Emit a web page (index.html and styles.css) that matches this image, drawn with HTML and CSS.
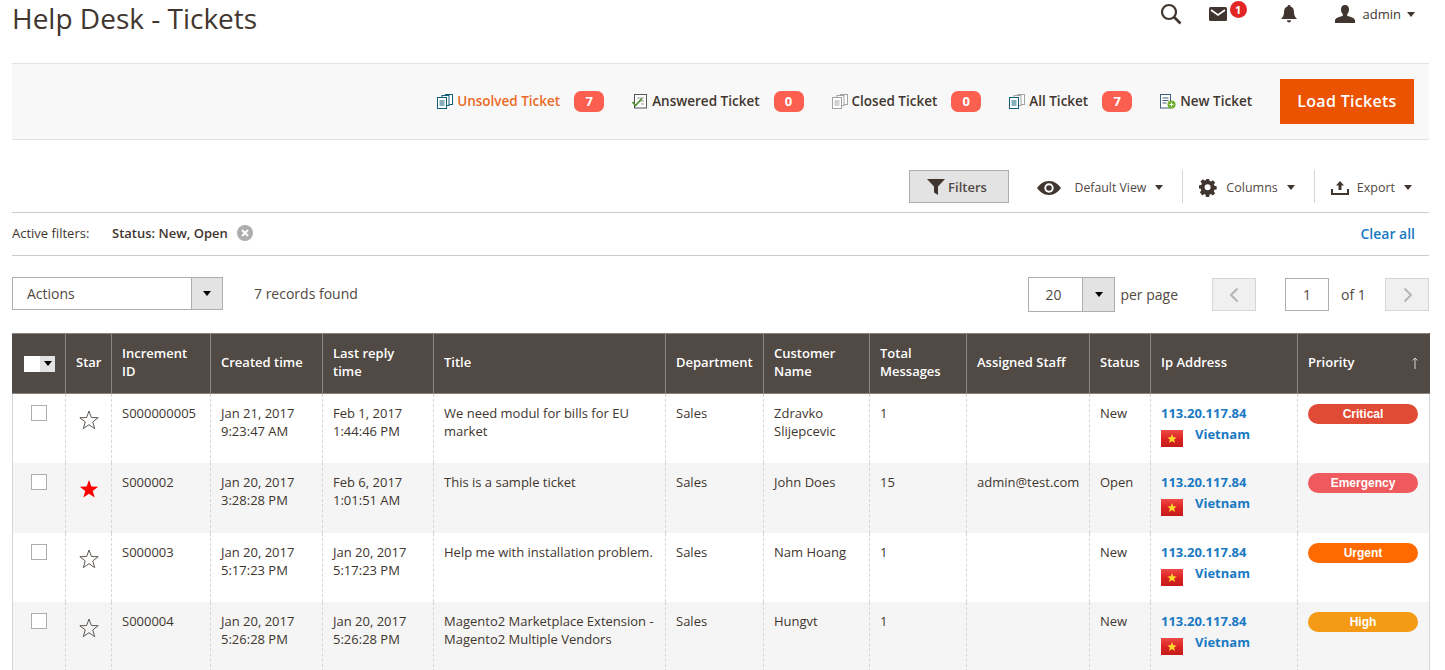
FILE: index.html
```html
<!DOCTYPE html>
<html>
<head>
  <link rel="stylesheet" href="styles.css">
</head>
<body>
  <svg class="defs" width="0" height="0">
    <linearGradient id="flag-red" x1="0" y1="0" x2="0" y2="1">
      <stop offset="0" stop-color="#ee4a48"/>
      <stop offset=".5" stop-color="#dc2322"/>
      <stop offset="1" stop-color="#c51c1c"/>
    </linearGradient>
    <symbol id="flag" viewBox="0 0 22 17">
      <rect width="22" height="17" fill="url(#flag-red)"/>
      <path d="M11 4l1.300 3.200 3.400.2-2.600 2.200.9 3.300-3-1.900-3 1.900.9-3.300-2.600-2.200 3.400-.2z" fill="#ffd92e"/>
    </symbol>
    <symbol id="star-line" viewBox="0 0 24 24">
      <path d="M12 2.200l2.600 7.100 7.400.2-5.900 4.600 2.100 7.300-6.200-4.300-6.200 4.300 2.100-7.300L2 9.500l7.400-.2z" fill="none" stroke="#514943" stroke-width="1"/>
    </symbol>
    <symbol id="star-full" viewBox="0 0 24 24">
      <path d="M12 2.200l2.600 7.100 7.400.2-5.900 4.600 2.100 7.300-6.200-4.300-6.200 4.300 2.100-7.300L2 9.500l7.400-.2z" fill="#f00"/>
    </symbol>
  </svg>

  <header class="page-head">
    <h1 class="page-title">Help Desk - Tickets</h1>
    <div class="head-actions">
      <svg class="head-search" viewBox="0 0 22 22"><circle cx="9" cy="9" r="7" fill="none" stroke="#41362f" stroke-width="2.200"/><path d="M14 14l6.500 6.500" stroke="#41362f" stroke-width="2.600"/></svg>
      <span class="head-mail">
        <svg viewBox="0 0 18 14"><rect width="18" height="14" rx="1.500" fill="#41362f"/><path d="M2 3l7 5 7-5" fill="none" stroke="#fff" stroke-width="1.600"/></svg>
        <span class="mail-count">1</span>
      </span>
      <svg class="head-bell" viewBox="0 0 16 18"><path d="M8 0c1 0 1.500.7 1.500 1.500C12 2.300 13 4.500 13 7c0 3.500 1 5 3 7H0c2-2 3-3.500 3-7 0-2.500 1-4.700 3.500-5.500C6.500.7 7 0 8 0z" fill="#41362f"/><path d="M6 15.200h4C10 16.500 9 17.500 8 17.500s-2-1-2-2.300z" fill="#41362f"/></svg>
      <span class="head-user">
        <svg viewBox="0 0 20 18"><path d="M10 0c2.800 0 4 2 4 4.500 0 2-.8 3.700-1.800 4.700v1.600c2.500 1 7.800 2 7.800 4.700V18H0v-2.500c0-2.700 5.300-3.700 7.800-4.700V9.200C6.800 8.200 6 6.500 6 4.500 6 2 7.200 0 10 0z" fill="#41362f"/></svg>
        admin <i class="caret"></i>
      </span>
    </div>
  </header>

  <section class="ticket-bar">
    <a class="ticket-link is-current">
      <svg viewBox="0 0 16 15"><g fill="#fff" stroke="#0f5f78" stroke-width="1"><rect x="8.500" y=".5" width="7" height="10"/><rect x="5" y="1.500" width="7" height="10"/><rect x=".5" y="3.500" width="9" height="11"/></g><path d="M2.500 7h5M2.500 9h5M2.500 11h5" stroke="#0f5f78"/></svg>
      Unsolved Ticket <span class="count">7</span>
    </a>
    <a class="ticket-link">
      <svg viewBox="0 0 16 15"><rect x="2.500" y=".5" width="12" height="13.500" fill="#fff" stroke="#555"/><path d="M5 4h7M7 7h5M9 10h3" stroke="#999"/><path d="M.5 8l3 3.500L10 4.500" fill="none" stroke="#4d8f2f" stroke-width="1.800"/></svg>
      Answered Ticket <span class="count">0</span>
    </a>
    <a class="ticket-link">
      <svg viewBox="0 0 16 15"><g fill="#fff" stroke="#a3a3a3" stroke-width="1"><rect x="8.500" y=".5" width="7" height="10"/><rect x="5" y="1.500" width="7" height="10"/><rect x=".5" y="3.500" width="9" height="11"/></g><path d="M2.500 7h5M2.500 9h5M2.500 11h5" stroke="#a3a3a3"/></svg>
      Closed Ticket <span class="count">0</span>
    </a>
    <a class="ticket-link">
      <svg viewBox="0 0 16 15"><g fill="#fff" stroke="#a3a3a3" stroke-width="1"><rect x="8.500" y=".5" width="7" height="10"/><rect x="5" y="1.500" width="7" height="10"/></g><rect x=".5" y="3.500" width="9" height="11" fill="#fff" stroke="#0f5f78"/><path d="M2.500 7h5M2.500 9h5M2.500 11h5" stroke="#0f5f78"/></svg>
      All Ticket <span class="count">7</span>
    </a>
    <a class="ticket-link">
      <svg viewBox="0 0 16 15"><rect x=".5" y=".5" width="10" height="13.500" fill="#fff" stroke="#44607a"/><path d="M2.500 4h6M2.500 6.500h6M2.500 9h4" stroke="#44607a"/><circle cx="11.500" cy="10.500" r="4" fill="#6fae2e"/><path d="M9.500 10.500h4M11.500 8.500v4" stroke="#fff"/></svg>
      New Ticket
    </a>
    <button class="load-btn">Load Tickets</button>
  </section>

  <section class="grid-tools">
    <button class="filters-btn">
      <svg viewBox="0 0 18 16"><path d="M0 0h18l-7 7.500V16l-4-2.500V7.500z" fill="#41362f"/></svg>
      Filters
    </button>
    <div class="tool view-tool">
      <svg class="eye" viewBox="0 0 24 14"><path d="M12 0c5.500 0 9.500 3.500 12 7-2.500 3.500-6.500 7-12 7S2.500 10.500 0 7c2.500-3.500 6.500-7 12-7z" fill="#41362f"/><circle cx="12" cy="7" r="4.700" fill="#fff"/><circle cx="12" cy="7" r="2.800" fill="#41362f"/></svg>
      <span class="view-name">Default View</span> <i class="caret"></i>
    </div>
    <div class="tool">
      <svg class="gear" viewBox="0 0 18 18"><path d="M7.300 0h3.400l.4 2.400 1.500.6 2-1.400 2.400 2.400-1.400 2 .6 1.500 2.400.4v3.400l-2.400.4-.6 1.500 1.400 2-2.400 2.400-2-1.400-1.500.6-.4 2.400H7.300l-.4-2.400-1.500-.6-2 1.400L1 14.200l1.400-2-.6-1.500L0 10.300V6.900l2.400-.4.6-1.500-1.400-2L4 .6l2 1.400 1.500-.6z" fill="#41362f" transform="translate(0 -.3) scale(.95)"/><circle cx="8.600" cy="8.200" r="3" fill="#fff"/></svg>
      Columns <i class="caret"></i>
    </div>
    <div class="tool">
      <svg class="upload" viewBox="0 0 18 14"><path d="M9 0l4 4.500h-2.500V9h-3V4.500H5z" fill="#41362f"/><path d="M1 8v5h16V8" fill="none" stroke="#41362f" stroke-width="2"/></svg>
      Export <i class="caret"></i>
    </div>
  </section>

  <section class="active-filters">
    <span class="af-label">Active filters:</span>
    <strong class="af-value">Status: New, Open</strong>
    <svg class="af-remove" viewBox="0 0 16 16"><circle cx="8" cy="8" r="8" fill="#adadad"/><path d="M5 5l6 6M11 5l-6 6" stroke="#fff" stroke-width="2"/></svg>
    <a class="clear-all">Clear all</a>
  </section>

  <section class="pager-row">
    <div class="select actions-select"><span>Actions</span><b><i class="caret dark"></i></b></div>
    <span class="records">7 records found</span>
    <div class="pager">
      <div class="select size-select"><span>20</span><b><i class="caret dark"></i></b></div>
      <span class="per-page">per page</span>
      <button class="page-btn"><svg viewBox="0 0 10 16"><path d="M8.500 1.500L2 8l6.500 6.500" fill="none" stroke="#b5b5b5" stroke-width="2"/></svg></button>
      <span class="page-input">1</span>
      <span class="page-of">of 1</span>
      <button class="page-btn next"><svg viewBox="0 0 10 16"><path d="M1.500 1.500L8 8l-6.500 6.500" fill="none" stroke="#b5b5b5" stroke-width="2"/></svg></button>
    </div>
  </section>

  <table class="tickets">
    <colgroup>
      <col class="c-check"><col class="c-star"><col class="c-id"><col class="c-created"><col class="c-reply"><col class="c-title">
      <col class="c-dept"><col class="c-cust"><col class="c-total"><col class="c-staff"><col class="c-status"><col class="c-ip"><col class="c-prio">
    </colgroup>
    <thead>
      <tr>
        <th class="mass"><span class="mass-box"><i></i><b><i class="caret dark small"></i></b></span></th>
        <th>Star</th>
        <th>Increment ID</th>
        <th>Created time</th>
        <th>Last reply time</th>
        <th>Title</th>
        <th>Department</th>
        <th>Customer Name</th>
        <th>Total Messages</th>
        <th>Assigned Staff</th>
        <th>Status</th>
        <th>Ip Address</th>
        <th class="sorted">Priority
          <svg class="sort-arrow" viewBox="0 0 8 12"><path d="M4 12V1M1.500 3.500L4 1l2.500 2.500" fill="none" stroke="#d6d6d6"/></svg>
        </th>
      </tr>
    </thead>
    <tbody>
      <tr>
        <td class="check"><span class="checkbox"></span></td>
        <td class="star"><svg><use href="#star-line"/></svg></td>
        <td>S000000005</td>
        <td>Jan 21, 2017<br>9:23:47 AM</td>
        <td>Feb 1, 2017<br>1:44:46 PM</td>
        <td>We need modul for bills for EU market</td>
        <td>Sales</td>
        <td>Zdravko Slijepcevic</td>
        <td>1</td>
        <td></td>
        <td>New</td>
        <td class="ip"><a>113.20.117.84</a><div class="country"><svg><use href="#flag"/></svg><a>Vietnam</a></div></td>
        <td class="prio-cell"><span class="prio critical">Critical</span></td>
      </tr>
      <tr>
        <td class="check"><span class="checkbox"></span></td>
        <td class="star"><svg><use href="#star-full"/></svg></td>
        <td>S000002</td>
        <td>Jan 20, 2017<br>3:28:28 PM</td>
        <td>Feb 6, 2017<br>1:01:51 AM</td>
        <td>This is a sample ticket</td>
        <td>Sales</td>
        <td>John Does</td>
        <td>15</td>
        <td>admin@test.com</td>
        <td>Open</td>
        <td class="ip"><a>113.20.117.84</a><div class="country"><svg><use href="#flag"/></svg><a>Vietnam</a></div></td>
        <td class="prio-cell"><span class="prio emergency">Emergency</span></td>
      </tr>
      <tr>
        <td class="check"><span class="checkbox"></span></td>
        <td class="star"><svg><use href="#star-line"/></svg></td>
        <td>S000003</td>
        <td>Jan 20, 2017<br>5:17:23 PM</td>
        <td>Jan 20, 2017<br>5:17:23 PM</td>
        <td>Help me with installation problem.</td>
        <td>Sales</td>
        <td>Nam Hoang</td>
        <td>1</td>
        <td></td>
        <td>New</td>
        <td class="ip"><a>113.20.117.84</a><div class="country"><svg><use href="#flag"/></svg><a>Vietnam</a></div></td>
        <td class="prio-cell"><span class="prio urgent">Urgent</span></td>
      </tr>
      <tr>
        <td class="check"><span class="checkbox"></span></td>
        <td class="star"><svg><use href="#star-line"/></svg></td>
        <td>S000004</td>
        <td>Jan 20, 2017<br>5:26:28 PM</td>
        <td>Jan 20, 2017<br>5:26:28 PM</td>
        <td>Magento2 Marketplace Extension - Magento2 Multiple Vendors</td>
        <td>Sales</td>
        <td>Hungvt</td>
        <td>1</td>
        <td></td>
        <td>New</td>
        <td class="ip"><a>113.20.117.84</a><div class="country"><svg><use href="#flag"/></svg><a>Vietnam</a></div></td>
        <td class="prio-cell"><span class="prio high">High</span></td>
      </tr>
    </tbody>
  </table>
</body>
</html>
```

FILE: styles.css
```css
* {
  box-sizing: border-box;
}

html {
  overflow: hidden;
}

body {
  margin: 0;
  padding: 0 16px 0 12px;
  height: 670px;
  overflow: hidden;
  background: #fff;
  color: #41362f;
  font-family: "Open Sans", sans-serif;
  font-size: 13px;
}

.defs {
  display: block;
  height: 0;
}

.caret {
  display: inline-block;
  width: 0;
  height: 0;
  border-left: 4.500px solid transparent;
  border-right: 4.500px solid transparent;
  border-top: 5px solid #41362f;
}

.caret.dark {
  border-top-color: #000;
}

.caret.small {
  border-left-width: 4px;
  border-right-width: 4px;
}

/* page header */
.page-head {
  display: flex;
  justify-content: space-between;
  align-items: flex-start;
  height: 63px;
}

.page-title {
  margin: 0;
  font-size: 28px;
  font-weight: 400;
  line-height: 36px;
  color: #41362f;
}

.head-actions {
  display: flex;
  align-items: center;
  height: 28px;
  padding-right: 14px;
}

.head-search {
  width: 22px;
  height: 22px;
  margin-right: 27px;
}

.head-mail {
  display: flex;
  position: relative;
  width: 38px;
  margin-right: 34px;
}

.head-mail svg {
  width: 18px;
  height: 14px;
}

.mail-count {
  position: absolute;
  left: 21px;
  top: -6px;
  width: 17px;
  height: 17px;
  border-radius: 50%;
  background: #e22626;
  color: #fff;
  font-size: 11px;
  font-weight: 700;
  line-height: 17px;
  text-align: center;
}

.head-bell {
  width: 16px;
  height: 18px;
  margin-right: 38px;
}

.head-user {
  display: flex;
  align-items: center;
  font-size: 13px;
}

.head-user svg {
  width: 20px;
  height: 18px;
  margin-right: 8px;
}

.head-user .caret {
  margin-left: 6px;
}

/* ticket bar */
.ticket-bar {
  display: flex;
  justify-content: flex-end;
  align-items: center;
  height: 77px;
  padding-right: 15px;
  background: #f8f8f8;
  border-top: 1px solid #e3e3e3;
  border-bottom: 1px solid #e3e3e3;
}

.ticket-link {
  display: flex;
  align-items: center;
  margin: 0 28px 1px 0;
  font-size: 13.500px;
  font-weight: 600;
  color: #41362f;
}

.ticket-link svg {
  width: 16px;
  height: 15px;
  margin-right: 4px;
}

.ticket-link.is-current {
  color: #eb6a28;
}

.count {
  width: 30px;
  height: 21px;
  margin-left: 14px;
  border-radius: 7px;
  background: #fa5f4f;
  color: #fff;
  font-size: 13px;
  font-weight: 700;
  line-height: 21px;
  text-align: center;
}

.load-btn {
  width: 134px;
  height: 45px;
  padding: 0 0 2px;
  border: 0;
  background: #eb5202;
  color: #fff;
  font-family: inherit;
  font-size: 16px;
  font-weight: 600;
  letter-spacing: .3px;
}

/* grid toolbar */
.grid-tools {
  display: flex;
  justify-content: flex-end;
  align-items: center;
  height: 73px;
  padding: 30px 17px 9px 0;
  border-bottom: 1px solid #ccc;
}

.filters-btn {
  display: flex;
  align-items: center;
  justify-content: center;
  gap: 3px;
  width: 100px;
  height: 33px;
  margin-right: 28px;
  padding: 0 5px 0 0;
  border: 1px solid #adadad;
  background: #e3e3e3;
  color: #514943;
  font-family: inherit;
  font-size: 13px;
  font-weight: 600;
}

.filters-btn svg {
  width: 18px;
  height: 16px;
}

.tool {
  display: flex;
  align-items: center;
  height: 33px;
  padding: 2px 0 0 16px;
  margin-left: 19px;
  border-left: 1px solid #d6d6d6;
  font-size: 12.500px;
  color: #514943;
}

.view-tool {
  padding-left: 0;
  margin-left: 0;
  border-left: 0;
}

.view-name {
  font-size: 12.300px;
}

.tool .caret {
  margin-left: 9px;
}

.eye {
  width: 24px;
  height: 14px;
  margin-right: 13px;
}

.gear {
  width: 18px;
  height: 18px;
  margin-right: 9px;
}

.upload {
  width: 18px;
  height: 14px;
  margin-right: 8px;
}

/* active filters */
.active-filters {
  display: flex;
  align-items: center;
  height: 43px;
  padding-bottom: 2px;
  border-bottom: 1px solid #ccc;
  font-size: 13px;
}

.af-label {
  width: 100px;
}

.af-value {
  font-weight: 600;
}

.af-remove {
  width: 16px;
  height: 16px;
  margin-left: 9px;
}

.clear-all {
  margin-left: auto;
  padding-right: 14px;
  color: #1979c3;
  font-size: 14px;
  font-weight: 600;
}

/* actions and pager */
.pager-row {
  display: flex;
  align-items: flex-start;
  height: 77px;
  padding-top: 21px;
  font-size: 14px;
  color: #514943;
}

.select {
  display: flex;
  height: 33px;
  border: 1px solid #adadad;
  background: #fff;
}

.select span {
  flex: 1;
  line-height: 31px;
}

.select b {
  display: flex;
  align-items: center;
  justify-content: center;
  width: 32px;
  border-left: 1px solid #adadad;
  background: #e3e3e3;
}

.actions-select {
  width: 211px;
}

.actions-select b {
  width: 31px;
}

.actions-select span {
  padding-left: 14px;
}

.records {
  margin-left: 31px;
  line-height: 33px;
}

.pager {
  display: flex;
  align-items: center;
  margin-left: auto;
}

.size-select {
  width: 87px;
  height: 35px;
}

.size-select span {
  padding-left: 16px;
  line-height: 33px;
}

.per-page {
  margin-left: 5px;
  margin-right: 34px;
}

.page-btn {
  display: flex;
  align-items: center;
  justify-content: center;
  width: 44px;
  height: 33px;
  padding: 0;
  border: 1px solid #d6d6d6;
  background: #f0f0f0;
}

.page-btn.next {
  padding-left: 2px;
}

.page-btn svg {
  width: 10px;
  height: 16px;
}

.page-input {
  width: 44px;
  height: 33px;
  margin-left: 29px;
  border: 1px solid #adadad;
  line-height: 31px;
  text-align: center;
}

.page-of {
  width: 56px;
  padding-left: 12px;
}

/* tickets table */
.tickets {
  width: 1417px;
  table-layout: fixed;
  border-collapse: collapse;
  border-left: 1px solid #d6d6d6;
  border-right: 1px solid #d6d6d6;
  font-size: 13px;
  color: #41362f;
}

.c-check { width: 53px; }
.c-star { width: 46px; }
.c-id { width: 99px; }
.c-created { width: 112px; }
.c-reply { width: 111px; }
.c-title { width: 232px; }
.c-dept { width: 98px; }
.c-cust { width: 106px; }
.c-total { width: 97px; }
.c-staff { width: 123px; }
.c-status { width: 61px; }
.c-ip { width: 147px; }
.c-prio { width: 132px; }

.tickets th {
  height: 60px;
  padding: 0 10px 4px;
  border: 1px solid #8a837f;
  background: #514943;
  color: #fff;
  font-size: 13px;
  font-weight: 600;
  line-height: 18px;
  text-align: left;
}

.tickets th:first-child {
  border-left-color: #514943;
}

.tickets th:last-child {
  border-right-color: #514943;
}

.tickets th.mass {
  padding-bottom: 0;
}

.tickets td {
  height: 69.500px;
  padding: 10px 10px 0;
  border-left: 1px dashed #d6d6d6;
  border-right: 1px dashed #d6d6d6;
  line-height: 18px;
  vertical-align: top;
}

.tickets td:first-child {
  border-left: 0;
}

.tickets td:last-child {
  border-right: 0;
}

.tickets tbody tr:nth-child(even) td {
  background: #f5f5f5;
}

.mass-box {
  display: flex;
  width: 31px;
  height: 16px;
  margin-left: 1px;
  background: #fff;
}

.mass-box > i {
  flex: 1;
}

.mass-box b {
  display: flex;
  align-items: center;
  justify-content: center;
  width: 15px;
  background: #e3e3e3;
}

.checkbox {
  display: block;
  width: 16px;
  height: 16px;
  margin: 1px 0 0 8px;
  border: 1px solid #adadad;
  background: #fff;
}

.tickets td.star {
  padding: 12px 0 0;
  text-align: center;
}

.star svg {
  display: block;
  width: 22px;
  height: 22px;
  margin: 3px auto 0;
}

.ip a {
  color: #1979c3;
  font-size: 13px;
  font-weight: 700;
  line-height: 18px;
}

.country {
  display: flex;
  align-items: flex-start;
  margin-top: 3px;
}

.country svg {
  width: 22px;
  height: 17px;
  margin: 5px 12px 0 0;
}

.sorted {
  position: relative;
}

.sort-arrow {
  position: absolute;
  right: 10px;
  top: 23px;
  width: 8px;
  height: 12px;
}

.tickets td.prio-cell {
  padding-right: 11px;
}

.prio {
  display: block;
  height: 20px;
  border-radius: 10px;
  color: #fff;
  font-family: "Liberation Sans", sans-serif;
  font-size: 12px;
  font-weight: 700;
  line-height: 20px;
  text-align: center;
}

.critical { background: #e04b36; }
.emergency { background: #ef5a5e; }
.urgent { background: #ff6a00; }
.high { background: #f49a14; }
```
